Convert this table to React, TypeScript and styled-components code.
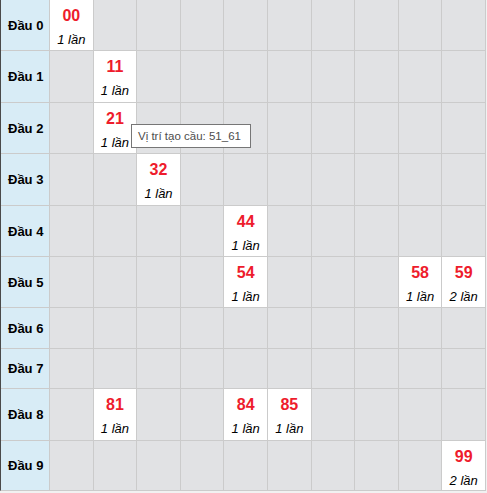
import React from "react";
import styled, { createGlobalStyle } from "styled-components";

const GlobalStyle = createGlobalStyle`
  html, body {
    margin: 0;
    padding: 0;
    background: #f1f1f1;
  }
  body {
    font-family: "Liberation Sans", Arial, sans-serif;
  }
`;

type Hit = { num: string; times: number };

// row index -> column index -> hit
const ROWS: Record<number, Record<number, Hit>> = {
  0: { 0: { num: "00", times: 1 } },
  1: { 1: { num: "11", times: 1 } },
  2: { 1: { num: "21", times: 1 } },
  3: { 2: { num: "32", times: 1 } },
  4: { 4: { num: "44", times: 1 } },
  5: {
    4: { num: "54", times: 1 },
    8: { num: "58", times: 1 },
    9: { num: "59", times: 2 },
  },
  6: {},
  7: {},
  8: {
    1: { num: "81", times: 1 },
    4: { num: "84", times: 1 },
    5: { num: "85", times: 1 },
  },
  9: { 9: { num: "99", times: 2 } },
};

const ROW_HEIGHTS = [50, 51, 50, 51, 50, 50, 40, 39, 51, 49];

const CauBoard = () => {
  return (
    <BoardWrap>
      <BoardGrid>
        {ROW_HEIGHTS.map((_, r) => (
          <React.Fragment key={r}>
            <HeadCell>Đầu {r}</HeadCell>
            {Array.from({ length: 10 }).map((__, c) => {
              const hit = ROWS[r][c];
              return (
                <NumCell key={c} $active={!!hit}>
                  {hit && (
                    <>
                      <NumText>{hit.num}</NumText>
                      <TimesText>{hit.times} lần</TimesText>
                    </>
                  )}
                </NumCell>
              );
            })}
          </React.Fragment>
        ))}
      </BoardGrid>
      <Tip>Vị trí tạo cầu: 51_61</Tip>
    </BoardWrap>
  );
};

const BoardWrap = styled.div`
  position: relative;
  width: 486px;
`;

const BoardGrid = styled.div`
  display: grid;
  grid-template-columns: 48px repeat(10, 1fr);
  grid-template-rows: ${ROW_HEIGHTS.map((h) => `${h}px`).join(" ")};
  gap: 1px;
  background: #cbcbcb;
  border-left: 1px solid #4a4a4a;
  border-right: 1px solid #cbcbcb;
  border-bottom: 1px solid #cbcbcb;
`;

const HeadCell = styled.div`
  display: flex;
  align-items: center;
  padding-left: 7px;
  background: #d8ecf6;
  color: #000;
  font-size: 13px;
  font-weight: bold;
  white-space: nowrap;
`;

const NumCell = styled.div<{ $active: boolean }>`
  display: flex;
  flex-direction: column;
  align-items: center;
  padding-top: 6px;
  background: ${(p) => (p.$active ? "#ffffff" : "#e1e2e4")};
  min-width: 0;
`;

const NumText = styled.div`
  font-size: 16px;
  line-height: 20px;
  font-weight: bold;
  color: #ee1c2c;
  margin-bottom: 6px;
`;

const TimesText = styled.div`
  font-size: 13px;
  line-height: 16px;
  font-style: italic;
  color: #000;
  white-space: nowrap;
`;

const Tip = styled.div`
  position: absolute;
  left: 131px;
  top: 124px;
  width: 120px;
  height: 24px;
  box-sizing: border-box;
  padding-left: 6px;
  display: flex;
  align-items: center;
  background: #fff;
  border: 1px solid #767676;
  font-family: "Liberation Sans", Arial, sans-serif;
  font-size: 11.5px;
  color: #4d4d4d;
  white-space: nowrap;
`;

export default function App() {
  return (
    <>
      <GlobalStyle />
      <CauBoard />
    </>
  );
}
